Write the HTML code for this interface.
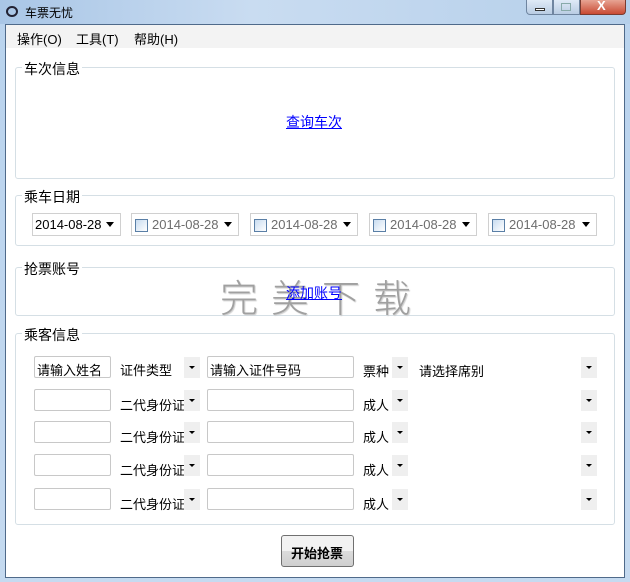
<!DOCTYPE html>
<html><head><meta charset="utf-8"><style>
*{margin:0;padding:0;box-sizing:border-box}
body{width:630px;height:582px;overflow:hidden;position:relative;background:linear-gradient(#b9d3ee,#c5daf0);font-family:"Liberation Sans","Noto Sans CJK SC",sans-serif;font-size:13px;color:#000}
.a{position:absolute}
.client{left:5px;top:24px;width:620px;height:554px;background:#fff;border:1px solid #4f6a8a}
.menu{left:6px;top:25px;width:618px;height:23px;background:#f3f3f3}
.menu span{position:absolute;top:4px;font-size:13px}
.grp{border:1px solid #d5dfe5;border-radius:3px}
.lbl{background:#fff;padding:0 2px;font-size:14px}
.dp{border:1px solid #d0d0d0;height:23px;background:#fff;font-size:13px}
.dp .t{position:absolute;left:20px;top:3px;color:#6d6d6d}
.dp .cb{position:absolute;left:3px;top:5px;width:13px;height:13px;border:1px solid #5a7fa6;background:linear-gradient(135deg,#c8dcf0,#fff)}
.arr{position:absolute;width:0;height:0;border-left:4px solid transparent;border-right:4px solid transparent;border-top:5px solid #000}
.inp{border:1px solid #c8c8c8;height:22px;background:#fff;border-radius:2px}
.dd{background:#efefef;width:16px;height:21px}
.dd i{position:absolute;left:5px;top:9px;width:0;height:0;border-left:3px solid transparent;border-right:3px solid transparent;border-top:3px solid #000}
.tx{font-size:13px}
</style></head><body>
<div class="a" style="left:0;top:0;width:630px;height:24px;background:linear-gradient(90deg,#a9c6e6,#c9dcf1 40%,#b5cfea)"></div>
<div class="a" style="left:6px;top:6px;width:12px;height:11px;border:2px solid #223;border-radius:50%"></div>
<div class="a" style="left:25px;top:4px;font-size:12px;color:#000">车票无忧</div>
<div class="a" style="left:526px;top:0;width:27px;height:15px;border:1px solid #6f85a0;border-top:none;border-radius:0 0 0 4px;background:linear-gradient(#dfeaf7,#b9cce3)"></div>
<div class="a" style="left:535px;top:8px;width:10px;height:3px;background:#fff;border:1px solid #333"></div>
<div class="a" style="left:553px;top:0;width:27px;height:15px;border:1px solid #6f85a0;border-top:none;background:linear-gradient(#dfeaf7,#b9cce3)"></div>
<div class="a" style="left:561px;top:3px;width:10px;height:8px;border:1px solid #8aa;"></div>
<div class="a" style="left:580px;top:0;width:46px;height:15px;border:1px solid #7a3b30;border-top:none;border-radius:0 0 4px 0;background:linear-gradient(#e7a493,#c94a33)"></div>
<div class="a" style="left:597px;top:-2px;color:#fff;font-weight:bold;font-size:13px">X</div>
<div class="a client"></div>
<div class="a menu"><span style="left:11px">操作(O)</span><span style="left:70px">工具(T)</span><span style="left:128px">帮助(H)</span></div>

<div class="a grp" style="left:15px;top:67px;width:600px;height:112px"></div>
<div class="a lbl" style="left:22px;top:59px">车次信息</div>
<div class="a" style="left:286px;top:112px;color:#00f;text-decoration:underline;font-size:14px">查询车次</div>

<div class="a grp" style="left:15px;top:195px;width:600px;height:51px"></div>
<div class="a lbl" style="left:22px;top:187px">乘车日期</div>
<div class="a dp" style="left:32px;top:213px;width:89px"><span class="t" style="left:2px;color:#000">2014-08-28</span><div class="arr" style="left:73px;top:8px"></div></div>
<div class="a dp" style="left:131px;top:213px;width:108px"><div class="cb"></div><span class="t">2014-08-28</span><div class="arr" style="left:92px;top:8px"></div></div>
<div class="a dp" style="left:250px;top:213px;width:108px"><div class="cb"></div><span class="t">2014-08-28</span><div class="arr" style="left:92px;top:8px"></div></div>
<div class="a dp" style="left:369px;top:213px;width:108px"><div class="cb"></div><span class="t">2014-08-28</span><div class="arr" style="left:92px;top:8px"></div></div>
<div class="a dp" style="left:488px;top:213px;width:109px"><div class="cb"></div><span class="t">2014-08-28</span><div class="arr" style="left:93px;top:8px"></div></div>

<div class="a grp" style="left:15px;top:267px;width:600px;height:49px"></div>
<div class="a lbl" style="left:22px;top:259px">抢票账号</div>
<div class="a" style="left:220px;top:268px;font-size:38px;font-weight:300;color:#a0a0a0;letter-spacing:13px;text-shadow:1px 1px 1px #ccc">完美下载</div>
<div class="a" style="left:286px;top:283px;color:#00f;text-decoration:underline;font-size:14px">添加账号</div>

<div class="a grp" style="left:15px;top:333px;width:600px;height:192px"></div>
<div class="a lbl" style="left:22px;top:325px">乘客信息</div>

<div class="a inp" style="left:34px;top:356px;width:77px"></div><div class="a tx" style="left:37px;top:360px">请输入姓名</div>
<div class="a tx" style="left:120px;top:360px">证件类型</div>
<div class="a dd" style="left:184px;top:357px"><i></i></div>
<div class="a inp" style="left:207px;top:356px;width:147px"></div><div class="a tx" style="left:210px;top:360px">请输入证件号码</div>
<div class="a tx" style="left:363px;top:361px">票种</div>
<div class="a dd" style="left:392px;top:357px"><i></i></div>
<div class="a tx" style="left:419px;top:361px">请选择席别</div>
<div class="a dd" style="left:581px;top:357px"><i></i></div>

<div class="a inp" style="left:34px;top:389px;width:77px"></div>
<div class="a tx" style="left:120px;top:395px">二代身份证</div><div class="a dd" style="left:184px;top:390px"><i></i></div>
<div class="a inp" style="left:207px;top:389px;width:147px"></div>
<div class="a tx" style="left:363px;top:395px">成人</div><div class="a dd" style="left:392px;top:390px"><i></i></div>
<div class="a dd" style="left:581px;top:390px"><i></i></div>

<div class="a inp" style="left:34px;top:421px;width:77px"></div>
<div class="a tx" style="left:120px;top:427px">二代身份证</div><div class="a dd" style="left:184px;top:422px"><i></i></div>
<div class="a inp" style="left:207px;top:421px;width:147px"></div>
<div class="a tx" style="left:363px;top:427px">成人</div><div class="a dd" style="left:392px;top:422px"><i></i></div>
<div class="a dd" style="left:581px;top:422px"><i></i></div>

<div class="a inp" style="left:34px;top:454px;width:77px"></div>
<div class="a tx" style="left:120px;top:460px">二代身份证</div><div class="a dd" style="left:184px;top:455px"><i></i></div>
<div class="a inp" style="left:207px;top:454px;width:147px"></div>
<div class="a tx" style="left:363px;top:460px">成人</div><div class="a dd" style="left:392px;top:455px"><i></i></div>
<div class="a dd" style="left:581px;top:455px"><i></i></div>

<div class="a inp" style="left:34px;top:488px;width:77px"></div>
<div class="a tx" style="left:120px;top:494px">二代身份证</div><div class="a dd" style="left:184px;top:489px"><i></i></div>
<div class="a inp" style="left:207px;top:488px;width:147px"></div>
<div class="a tx" style="left:363px;top:494px">成人</div><div class="a dd" style="left:392px;top:489px"><i></i></div>
<div class="a dd" style="left:581px;top:489px"><i></i></div>

<div class="a" style="left:281px;top:535px;width:73px;height:32px;border:1px solid #707070;border-radius:3px;background:linear-gradient(#f2f2f2 50%,#dcdcdc 50%,#cfcfcf)"></div>
<div class="a" style="left:291px;top:543px;font-weight:bold;font-size:13px">开始抢票</div>
</body></html>
